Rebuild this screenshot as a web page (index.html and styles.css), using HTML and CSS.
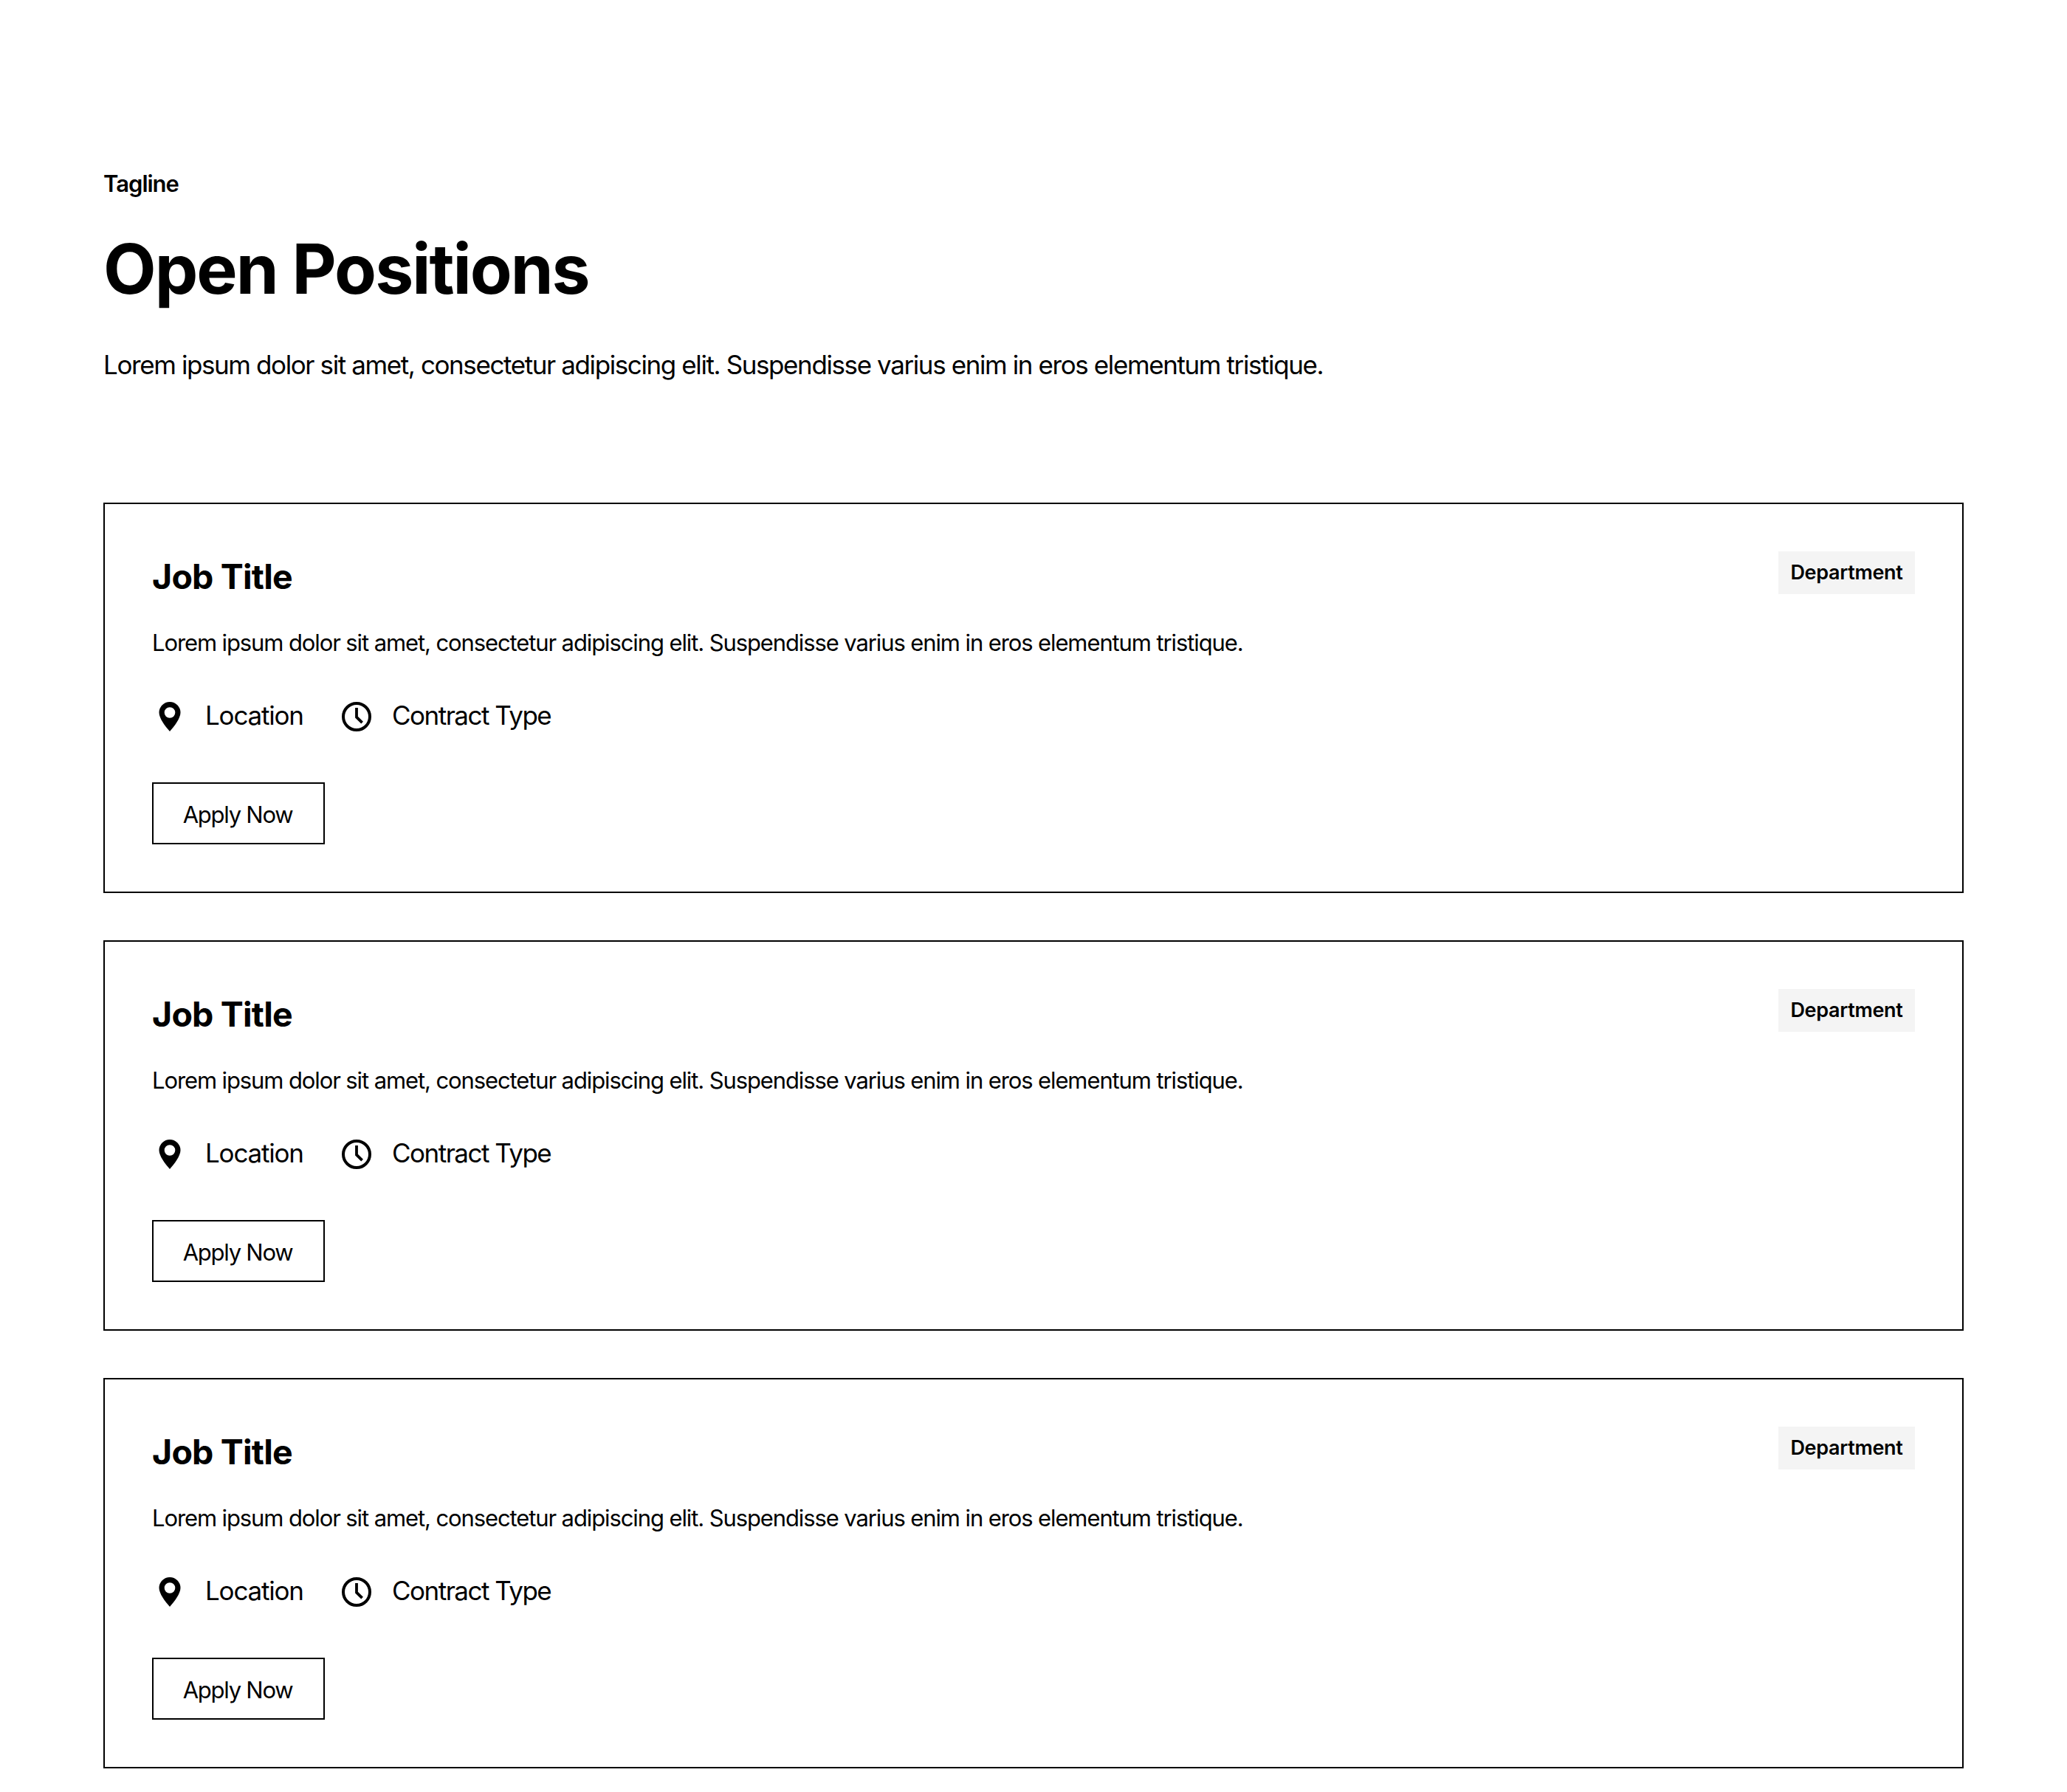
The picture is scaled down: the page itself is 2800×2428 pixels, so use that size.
FILE: index.html
```html
<!DOCTYPE html>
<html lang="en">
<head>
    <meta charset="UTF-8">
    <meta name="viewport" content="width=device-width, initial-scale=1.0">
    <title>Open Positions</title>
    <link rel="stylesheet" href="styles.css">
</head>
<body>
    <svg class="sprite">
        <symbol id="icon-map" viewBox="0 0 24 24">
            <path fill-rule="evenodd" d="M12 2a7.25 7.25 0 0 0-7.25 7.25C4.75 13 8.7 18.3 12 22c3.3-3.7 7.25-9 7.25-12.75A7.25 7.25 0 0 0 12 2zm0 3.6a3.65 3.65 0 1 1 0 7.3 3.65 3.65 0 0 1 0-7.3z"/>
        </symbol>
        <symbol id="icon-time" viewBox="0 0 24 24">
            <circle cx="12" cy="12" r="9" fill="none" stroke="currentColor" stroke-width="2"/>
            <path d="M12 6v6.3l3.8 3.8" fill="none" stroke="currentColor" stroke-width="1.9"/>
        </symbol>
    </svg>
    <section class="container">
        <header class="header">
            <p class="tagline">Tagline</p>
            <h1>Open Positions</h1>
            <p class="intro">Lorem ipsum dolor sit amet, consectetur adipiscing elit. Suspendisse varius enim in eros elementum tristique.</p>
        </header>
        <div class="jobs">
            <article class="job">
                <div class="job-top">
                    <h2>Job Title</h2>
                    <span class="badge">Department</span>
                </div>
                <p class="description">Lorem ipsum dolor sit amet, consectetur adipiscing elit. Suspendisse varius enim in eros elementum tristique.</p>
                <div class="meta">
                    <div class="meta-item"><svg class="icon"><use href="#icon-map"/></svg><span class="location">Location</span></div>
                    <div class="meta-item"><svg class="icon"><use href="#icon-time"/></svg><span>Contract Type</span></div>
                </div>
                <button class="btn">Apply Now</button>
            </article>
            <article class="job">
                <div class="job-top">
                    <h2>Job Title</h2>
                    <span class="badge">Department</span>
                </div>
                <p class="description">Lorem ipsum dolor sit amet, consectetur adipiscing elit. Suspendisse varius enim in eros elementum tristique.</p>
                <div class="meta">
                    <div class="meta-item"><svg class="icon"><use href="#icon-map"/></svg><span class="location">Location</span></div>
                    <div class="meta-item"><svg class="icon"><use href="#icon-time"/></svg><span>Contract Type</span></div>
                </div>
                <button class="btn">Apply Now</button>
            </article>
            <article class="job">
                <div class="job-top">
                    <h2>Job Title</h2>
                    <span class="badge">Department</span>
                </div>
                <p class="description">Lorem ipsum dolor sit amet, consectetur adipiscing elit. Suspendisse varius enim in eros elementum tristique.</p>
                <div class="meta">
                    <div class="meta-item"><svg class="icon"><use href="#icon-map"/></svg><span class="location">Location</span></div>
                    <div class="meta-item"><svg class="icon"><use href="#icon-time"/></svg><span>Contract Type</span></div>
                </div>
                <button class="btn">Apply Now</button>
            </article>
        </div>
    </section>
</body>
</html>
```
FILE: styles.css
```css
* {
    box-sizing: border-box;
}
body {
    font-family: Inter, sans-serif;
    margin: 0;
    background-color: #fff;
    color: #000;
}
h1, h2, p {
    margin: 0;
}
.sprite {
    display: none;
}
.container {
    padding: 224px 140px 0;
}
.header {
    margin-bottom: 160px;
}
.tagline {
    margin-bottom: 30px;
    font-size: 31px;
    font-weight: 600;
    line-height: 50px;
    letter-spacing: -1px;
}
h1 {
    margin-bottom: 43px;
    font-size: 93px;
    font-weight: 700;
    line-height: 120px;
    letter-spacing: -2px;
}
.intro {
    font-size: 35px;
    line-height: 54px;
    letter-spacing: -1.4px;
}
.jobs {
    display: flex;
    flex-direction: column;
    gap: 64px;
}
.job {
    height: 529px;
    padding: 64px;
    border: 2px solid #000;
}
.job-top {
    display: flex;
    justify-content: space-between;
    align-items: flex-start;
    margin-bottom: 30px;
}
h2 {
    font-size: 46.5px;
    font-weight: 700;
    line-height: 69px;
    letter-spacing: -0.8px;
}
.badge {
    width: 185px;
    padding: 8px 0;
    background-color: #f4f4f4;
    font-size: 27px;
    font-weight: 600;
    line-height: 42px;
    letter-spacing: -0.3px;
    text-align: center;
}
.description {
    margin-bottom: 46px;
    font-size: 31px;
    line-height: 50px;
    letter-spacing: -1.11px;
}
.meta {
    display: flex;
    gap: 48px;
    margin-bottom: 64px;
}
.meta-item {
    display: flex;
    align-items: center;
    gap: 24px;
    font-size: 35px;
    line-height: 54px;
    letter-spacing: -1.5px;
}
.location {
    width: 133px;
    letter-spacing: -1.19px;
}
.icon {
    width: 48px;
    height: 48px;
    margin-top: 4px;
    fill: #000;
}
.btn {
    display: block;
    width: 234px;
    height: 84px;
    padding: 2px 2px 0 0;
    border: 2px solid #000;
    background: none;
    color: #000;
    font-family: inherit;
    font-size: 31px;
    letter-spacing: -1.25px;
    cursor: pointer;
}
```
